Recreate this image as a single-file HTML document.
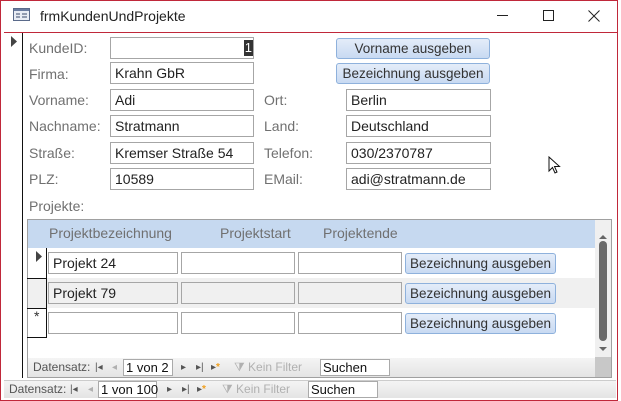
<!DOCTYPE html>
<html><head><meta charset="utf-8"><style>
*{margin:0;padding:0;box-sizing:border-box}
body{width:621px;height:401px;overflow:hidden;background:#fff;font-family:"Liberation Sans",sans-serif;position:relative}
.a{position:absolute}
.lbl{position:absolute;font-size:14px;color:#707070;line-height:16px;white-space:nowrap}
.tb{position:absolute;border:1px solid #a6a6a6;background:#fff;font-size:14px;color:#222;padding:2px 0 0 4px;line-height:17px;height:22px;white-space:nowrap}
.btn{position:absolute;border:1px solid #8eb1dc;border-radius:3px;background:linear-gradient(#e4edf9,#c8daf2);font-size:13.5px;color:#333;text-align:center;line-height:19px;height:21px;white-space:nowrap}
.nav{position:absolute;background:linear-gradient(#f4f4f4,#e4e4e4);font-size:12px;color:#555;line-height:17px}
.nav span{position:absolute;white-space:nowrap}
.gray{color:#b0b0b0}
</style></head><body>
<div class="a" style="left:0;top:0;width:618px;height:401px;border:1px solid #c0283a;border-top:0"></div>
<div class="a" style="left:0;top:0;width:618px;height:1px;background:#c0283a"></div>
<div class="a" style="left:4px;top:32px;width:613px;height:1px;background:#c0283a"></div>
<svg class="a" style="left:13px;top:8px" width="18" height="14"><rect x="0.5" y="0.5" width="16" height="12" fill="#e8ecf4" stroke="#5a6a8a"/><rect x="1" y="1" width="15" height="2" fill="#6a7ca0"/><path d="M3 6h4M3 9h4M9 6h5M9 9h5" stroke="#3a4a6a"/></svg>
<div class="a" style="left:40px;top:8px;font-size:14px;color:#222">frmKundenUndProjekte</div>
<div class="a" style="left:497px;top:15px;width:11px;height:1px;background:#222"></div>
<div class="a" style="left:543px;top:10px;width:11px;height:11px;border:1px solid #222"></div>
<svg class="a" style="left:588px;top:10px" width="12" height="12"><path d="M0.5 0.5L11.5 11.5M11.5 0.5L0.5 11.5" stroke="#222"/></svg>
<svg class="a" style="left:10px;top:36px" width="8" height="12"><path d="M1 0L7 5.5L1 11Z" fill="#444"/></svg>
<div class="a" style="left:22px;top:33px;width:1px;height:345px;background:#111"></div>
<div class="lbl" style="left:29px;top:40px">KundeID:</div>
<div class="lbl" style="left:29px;top:66px">Firma:</div>
<div class="lbl" style="left:29px;top:92px">Vorname:</div>
<div class="lbl" style="left:29px;top:118px">Nachname:</div>
<div class="lbl" style="left:29px;top:145px">Straße:</div>
<div class="lbl" style="left:29px;top:171px">PLZ:</div>
<div class="lbl" style="left:29px;top:198px">Projekte:</div>
<div class="tb" style="left:110px;top:37px;width:144px"><span style="position:absolute;right:0;top:2px;background:#333;color:#fff;font-size:13px;line-height:16px;padding:0 1px">1</span></div>
<div class="tb" style="left:110px;top:62px;width:144px">Krahn GbR</div>
<div class="tb" style="left:110px;top:89px;width:144px">Adi</div>
<div class="tb" style="left:110px;top:115px;width:144px">Stratmann</div>
<div class="tb" style="left:110px;top:142px;width:144px">Kremser Straße 54</div>
<div class="tb" style="left:110px;top:168px;width:144px">10589</div>
<div class="lbl" style="left:264px;top:92px">Ort:</div>
<div class="lbl" style="left:264px;top:118px">Land:</div>
<div class="lbl" style="left:264px;top:145px">Telefon:</div>
<div class="lbl" style="left:264px;top:171px">EMail:</div>
<div class="tb" style="left:346px;top:89px;width:145px">Berlin</div>
<div class="tb" style="left:346px;top:115px;width:145px">Deutschland</div>
<div class="tb" style="left:346px;top:142px;width:145px">030/2370787</div>
<div class="tb" style="left:346px;top:168px;width:145px">adi@stratmann.de</div>
<div class="btn" style="left:336px;top:38px;width:154px">Vorname ausgeben</div>
<div class="btn" style="left:336px;top:63px;width:154px">Bezeichnung ausgeben</div>
<svg class="a" style="left:548px;top:156px" width="14" height="20"><path d="M1 1L1 15L4.5 11.5L7 17L9 16L6.5 10.5L11.5 10.5Z" fill="#fff" stroke="#111"/></svg>
<div class="a" style="left:27px;top:219px;width:585px;height:159px;border:1px solid #a0a0a0;background:#fff"></div>
<div class="a" style="left:28px;top:220px;width:567px;height:28px;background:#c6d9f0"></div>
<div class="lbl" style="left:49px;top:225px">Projektbezeichnung</div>
<div class="lbl" style="left:220px;top:225px">Projektstart</div>
<div class="lbl" style="left:323px;top:225px">Projektende</div>
<div class="a" style="left:28px;top:278px;width:567px;height:30px;background:#f0f0f0"></div>
<div class="a" style="left:27px;top:248px;width:20px;height:90px;border:1px solid #111;border-left:0;border-top:0"></div>
<div class="a" style="left:27px;top:278px;width:20px;height:1px;background:#111"></div>
<div class="a" style="left:27px;top:308px;width:20px;height:1px;background:#111"></div>
<svg class="a" style="left:35px;top:251px" width="8" height="12"><path d="M1 0L7 5.5L1 11Z" fill="#444"/></svg>
<div class="a" style="left:34px;top:308px;font-size:14px;color:#333">*</div>
<div class="tb" style="left:48px;top:252px;width:130px">Projekt 24</div>
<div class="tb" style="left:181px;top:252px;width:114px"></div>
<div class="tb" style="left:298px;top:252px;width:104px"></div>
<div class="btn" style="left:405px;top:253px;width:151px">Bezeichnung ausgeben</div>
<div class="tb" style="left:48px;top:282px;width:130px;background:#f0f0f0">Projekt 79</div>
<div class="tb" style="left:181px;top:282px;width:114px;background:#f0f0f0"></div>
<div class="tb" style="left:298px;top:282px;width:104px;background:#f0f0f0"></div>
<div class="btn" style="left:405px;top:283px;width:151px">Bezeichnung ausgeben</div>
<div class="tb" style="left:48px;top:312px;width:130px"></div>
<div class="tb" style="left:181px;top:312px;width:114px"></div>
<div class="tb" style="left:298px;top:312px;width:104px"></div>
<div class="btn" style="left:405px;top:313px;width:151px">Bezeichnung ausgeben</div>
<div class="a" style="left:595px;top:220px;width:16px;height:137px;background:#f0f0f0"></div>
<svg class="a" style="left:598px;top:234px" width="10" height="6"><path d="M1 5L5 1L9 5Z" fill="#666"/></svg>
<div class="a" style="left:599px;top:241px;width:8px;height:100px;background:#6a6a6a;border-radius:4px"></div>
<svg class="a" style="left:598px;top:346px" width="10" height="6"><path d="M1 1L5 5L9 1Z" fill="#666"/></svg>
<div class="a" style="left:595px;top:357px;width:16px;height:20px;background:#c8c8c8"></div>
<div class="nav" style="left:28px;top:358px;width:567px;height:19px">
<span style="left:5px;top:1px">Datensatz:</span>
<span style="left:67px;top:1px;font-size:10px">|◂</span><span class="gray" style="left:84px;top:1px;font-size:10px">◂</span>
<span style="left:95px;top:1px;width:50px;height:17px;background:#fff;border:1px solid #aaa;color:#111;font-size:13px;padding-left:2px;line-height:15px">1 von 2</span>
<span style="left:153px;top:1px;font-size:10px">▸</span><span style="left:168px;top:1px;font-size:10px">▸|</span><span style="left:183px;top:1px;font-size:10px">▸<b style="color:#f0a020">*</b></span>
<span class="gray" style="left:206px;top:1px;font-size:12px">⧩ Kein Filter</span>
<span style="left:292px;top:1px;width:70px;height:17px;background:#fff;border:1px solid #aaa;color:#111;font-size:13px;padding-left:2px;line-height:15px">Suchen</span>
</div>
<div class="nav" style="left:4px;top:380px;width:612px;height:18px;border-top:1px solid #ccc">
<span style="left:5px;top:0">Datensatz:</span>
<span style="left:66px;top:0;font-size:10px">|◂</span><span class="gray" style="left:84px;top:0;font-size:10px">◂</span>
<span style="left:94px;top:0;width:59px;height:17px;background:#fff;border:1px solid #aaa;color:#111;font-size:13px;padding-left:2px;line-height:15px">1 von 100</span>
<span style="left:163px;top:0;font-size:10px">▸</span><span style="left:178px;top:0;font-size:10px">▸|</span><span style="left:193px;top:0;font-size:10px">▸<b style="color:#f0a020">*</b></span>
<span class="gray" style="left:218px;top:0;font-size:12px">⧩ Kein Filter</span>
<span style="left:304px;top:0;width:70px;height:17px;background:#fff;border:1px solid #aaa;color:#111;font-size:13px;padding-left:2px;line-height:15px">Suchen</span>
</div>
</body></html>
